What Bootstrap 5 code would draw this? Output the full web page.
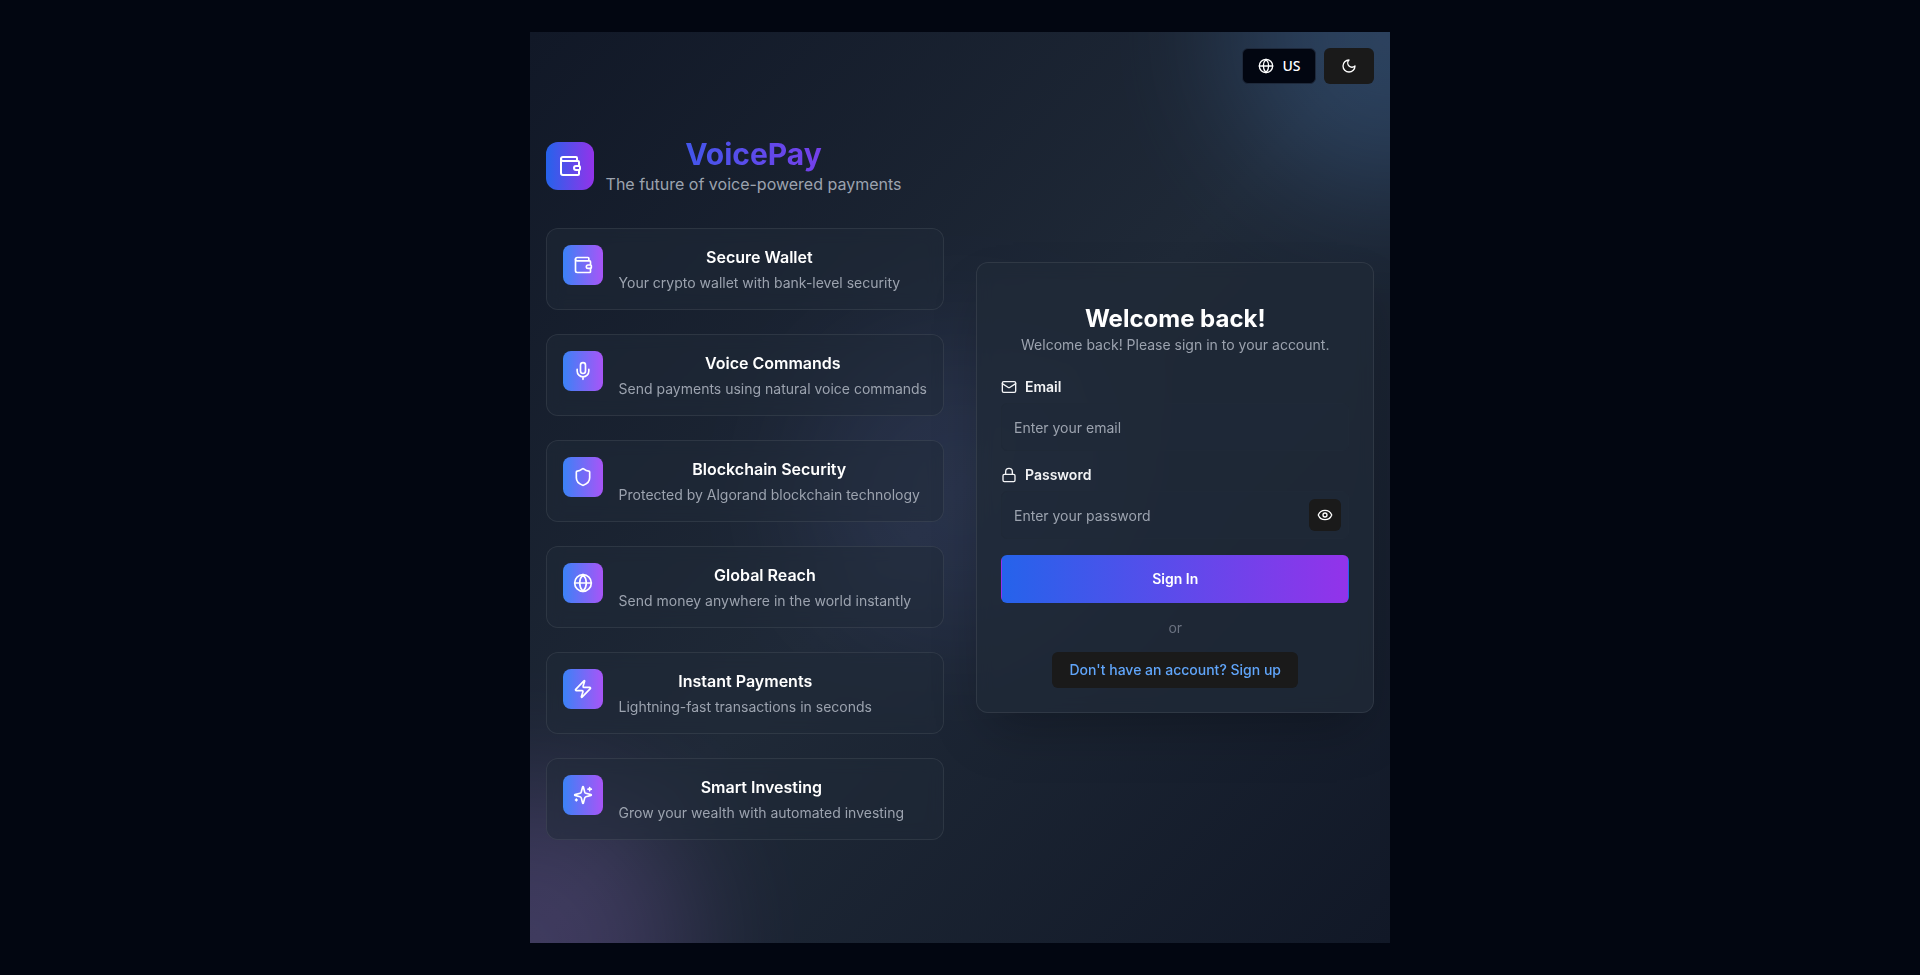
<!DOCTYPE html>
<html lang="en" data-bs-theme="dark">
<head>
<meta charset="utf-8">
<meta name="viewport" content="width=device-width, initial-scale=1">
<title>VoicePay</title>
<link href="https://cdn.jsdelivr.net/npm/bootstrap@5.3.0/dist/css/bootstrap.min.css" rel="stylesheet">
<style>
  :root {
    --page: #020611;
    --muted: #9ca3af;
    --line: rgba(255, 255, 255, .08);
  }
  body {
    background: var(--page);
    color: #fff;
    font-family: Inter, "Liberation Sans", sans-serif;
    font-size: 14px;
    line-height: 20px;
  }
  .icon {
    width: 16px;
    height: 16px;
    flex: none;
    fill: none;
    stroke: currentColor;
    stroke-width: 2;
    stroke-linecap: round;
    stroke-linejoin: round;
  }
  .icon-md { width: 20px; height: 20px; }
  .icon-lg { width: 24px; height: 24px; }

  .page-frame { min-height: 100vh; padding: 32px; }
  .stage {
    background: linear-gradient(to bottom right, #111827, #1f2937, #111827);
    isolation: isolate;
  }
  .glow {
    z-index: -1;
    width: 320px;
    height: 320px;
    border-radius: 50%;
    filter: blur(64px);
    opacity: .2;
  }
  .glow-blue { top: -160px; right: -160px; background: #60a5fa; }
  .glow-purple { bottom: -160px; left: -160px; background: #c084fc; }
  .glow-indigo { background: #818cf8; opacity: .1; }

  .columns { display: grid; gap: 32px; }
  @media (min-width: 992px) { .columns { grid-template-columns: 1fr 1fr; } }

  .dark-btn, .dark-btn:hover {
    background: #1a1a1a;
    color: #fff;
    border: 0;
    border-radius: 6px;
    font-size: 14px;
    font-weight: 500;
    line-height: 20px;
    padding: 8px 17px;
    min-height: 36px;
  }
  .locale-btn, .locale-btn:hover {
    background: var(--page);
    color: #fff;
    border: 1px solid #1e293b;
    border-radius: 6px;
    font: 500 14px/20px "Noto Sans", sans-serif;
    padding: 7px 15px;
  }
  .brand-tile {
    width: 48px;
    height: 48px;
    border-radius: 12px;
    background: linear-gradient(to right, #2563eb, #9333ea);
  }
  .brand-name {
    font-size: 30px;
    line-height: 36px;
    font-weight: 700;
    background: linear-gradient(to right, #2563eb, #9333ea);
    -webkit-background-clip: text;
    background-clip: text;
    color: transparent;
  }
  .tagline { font-size: 16px; line-height: 24px; color: var(--muted); }

  .feature, .panel {
    background: rgba(31, 41, 55, .5);
    border: 1px solid var(--line);
    border-radius: 12px;
    backdrop-filter: blur(8px);
  }
  .feature-tile {
    width: 40px;
    height: 40px;
    border-radius: 8px;
    background: linear-gradient(to right, #3b82f6, #a855f7);
  }
  .feature-title { font-size: 16px; line-height: 24px; font-weight: 600; }
  .soft { color: var(--muted); }

  .panel {
    background: rgba(31, 41, 55, .8);
    padding: 40px 24px 24px;
    box-shadow: 0 25px 50px -12px rgba(0, 0, 0, .25);
  }
  .panel-title { font-size: 24px; line-height: 32px; font-weight: 700; }
  .field-label { line-height: 16px; font-weight: 600; color: #f3f4f6; }
  .field, .field:focus {
    height: 48px;
    padding: 0 12px;
    font-size: 14px;
    color: #fff;
    background: rgba(31, 41, 55, .5);
    border: 1px solid #1f2937;
    border-radius: 6px;
  }
  .field::placeholder { color: var(--muted); }
  .eye-btn, .eye-btn:hover {
    right: 8px;
    width: 32px;
    height: 32px;
    background: #1a1a1a;
    color: #fff;
    border: 0;
    border-radius: 6px;
  }
  .submit-btn, .submit-btn:hover {
    height: 48px;
    font-size: 14px;
    font-weight: 600;
    line-height: 20px;
    color: #fff;
    border: 1px solid transparent;
    border-radius: 6px;
    background: linear-gradient(to right, #2563eb, #9333ea);
  }
  .or-text { color: #6b7280; line-height: 21px; padding: 14px 0; }
  .signup-btn, .signup-btn:hover { color: #60a5fa; }
</style>
</head>
<body>
<svg class="d-none" aria-hidden="true">
  <symbol id="wallet" viewBox="0 0 24 24"><path d="M19 7V4a1 1 0 0 0-1-1H5a2 2 0 0 0 0 4h15a1 1 0 0 1 1 1v4h-3a2 2 0 0 0 0 4h3a1 1 0 0 0 1-1v-2a1 1 0 0 0-1-1"/><path d="M3 5v14a2 2 0 0 0 2 2h15a1 1 0 0 0 1-1v-4"/></symbol>
  <symbol id="mic" viewBox="0 0 24 24"><path d="M12 2a3 3 0 0 0-3 3v7a3 3 0 0 0 6 0V5a3 3 0 0 0-3-3Z"/><path d="M19 10v2a7 7 0 0 1-14 0v-2M12 19v3"/></symbol>
  <symbol id="shield" viewBox="0 0 24 24"><path d="M20 13c0 5-3.5 7.500-7.660 8.950a1 1 0 0 1-.67-.01C7.500 20.500 4 18 4 13V6a1 1 0 0 1 1-1c2 0 4.500-1.200 6.240-2.720a1.170 1.170 0 0 1 1.520 0C14.510 3.810 17 5 19 5a1 1 0 0 1 1 1z"/></symbol>
  <symbol id="globe" viewBox="0 0 24 24"><circle cx="12" cy="12" r="10"/><path d="M12 2a14.500 14.500 0 0 0 0 20 14.500 14.500 0 0 0 0-20M2 12h20"/></symbol>
  <symbol id="zap" viewBox="0 0 24 24"><path d="M4 14a1 1 0 0 1-.78-1.630l9.900-10.200a.5.500 0 0 1 .86.460l-1.920 6.020A1 1 0 0 0 13 10h7a1 1 0 0 1 .78 1.630l-9.900 10.200a.5.500 0 0 1-.86-.46l1.920-6.020A1 1 0 0 0 11 14z"/></symbol>
  <symbol id="sparkles" viewBox="0 0 24 24"><path d="M9.937 15.500A2 2 0 0 0 8.500 14.063l-6.135-1.582a.5.500 0 0 1 0-.962L8.500 9.936A2 2 0 0 0 9.937 8.500l1.582-6.135a.5.500 0 0 1 .963 0L14.063 8.500A2 2 0 0 0 15.500 9.937l6.135 1.581a.5.500 0 0 1 0 .964L15.500 14.063a2 2 0 0 0-1.437 1.437l-1.582 6.135a.5.500 0 0 1-.963 0z"/><path d="M20 3v4M22 5h-4M4 17v2M5 18H3"/></symbol>
  <symbol id="moon" viewBox="0 0 24 24"><path d="M12 3a6 6 0 0 0 9 9 9 9 0 1 1-9-9Z"/></symbol>
  <symbol id="mail" viewBox="0 0 24 24"><rect width="20" height="16" x="2" y="4" rx="2"/><path d="m22 7-8.970 5.700a1.940 1.940 0 0 1-2.060 0L2 7"/></symbol>
  <symbol id="lock" viewBox="0 0 24 24"><rect width="18" height="11" x="3" y="11" rx="2"/><path d="M7 11V7a5 5 0 0 1 10 0v4"/></symbol>
  <symbol id="eye" viewBox="0 0 24 24"><path d="M2.062 12.348a1 1 0 0 1 0-.696 10.750 10.750 0 0 1 19.876 0 1 1 0 0 1 0 .696 10.750 10.750 0 0 1-19.876 0"/><circle cx="12" cy="12" r="3"/></symbol>
</svg>

<div class="page-frame d-flex justify-content-center">
  <div class="stage position-relative overflow-hidden d-flex align-items-center p-3">
    <div class="glow glow-blue position-absolute"></div>
    <div class="glow glow-purple position-absolute"></div>
    <div class="glow glow-indigo position-absolute top-50 start-50 translate-middle"></div>

    <div class="position-absolute top-0 end-0 m-3 d-flex align-items-center gap-2">
      <button type="button" class="btn locale-btn d-flex align-items-center gap-2"><svg class="icon" aria-hidden="true"><use href="#globe"/></svg>US</button>
      <button type="button" class="btn dark-btn d-flex align-items-center" aria-label="Toggle theme"><svg class="icon" aria-hidden="true"><use href="#moon"/></svg></button>
    </div>

    <main class="columns align-items-center">
      <section>
        <header class="d-flex align-items-center mb-4 pb-2">
          <div class="brand-tile d-flex align-items-center justify-content-center me-2"><svg class="icon icon-lg" aria-hidden="true"><use href="#wallet"/></svg></div>
          <div class="text-center ms-1">
            <h1 class="brand-name mb-0">VoicePay</h1>
            <p class="tagline mb-0">The future of voice-powered payments</p>
          </div>
        </header>
        <div class="d-flex flex-column gap-4">
          <article class="feature d-flex align-items-start gap-3 p-3">
            <div class="feature-tile d-flex align-items-center justify-content-center"><svg class="icon icon-md" aria-hidden="true"><use href="#wallet"/></svg></div>
            <div class="text-center"><h2 class="feature-title mb-1">Secure Wallet</h2><p class="soft mb-0">Your crypto wallet with bank-level security</p></div>
          </article>
          <article class="feature d-flex align-items-start gap-3 p-3">
            <div class="feature-tile d-flex align-items-center justify-content-center"><svg class="icon icon-md" aria-hidden="true"><use href="#mic"/></svg></div>
            <div class="text-center"><h2 class="feature-title mb-1">Voice Commands</h2><p class="soft mb-0">Send payments using natural voice commands</p></div>
          </article>
          <article class="feature d-flex align-items-start gap-3 p-3">
            <div class="feature-tile d-flex align-items-center justify-content-center"><svg class="icon icon-md" aria-hidden="true"><use href="#shield"/></svg></div>
            <div class="text-center"><h2 class="feature-title mb-1">Blockchain Security</h2><p class="soft mb-0">Protected by Algorand blockchain technology</p></div>
          </article>
          <article class="feature d-flex align-items-start gap-3 p-3">
            <div class="feature-tile d-flex align-items-center justify-content-center"><svg class="icon icon-md" aria-hidden="true"><use href="#globe"/></svg></div>
            <div class="text-center"><h2 class="feature-title mb-1">Global Reach</h2><p class="soft mb-0">Send money anywhere in the world instantly</p></div>
          </article>
          <article class="feature d-flex align-items-start gap-3 p-3">
            <div class="feature-tile d-flex align-items-center justify-content-center"><svg class="icon icon-md" aria-hidden="true"><use href="#zap"/></svg></div>
            <div class="text-center"><h2 class="feature-title mb-1">Instant Payments</h2><p class="soft mb-0">Lightning-fast transactions in seconds</p></div>
          </article>
          <article class="feature d-flex align-items-start gap-3 p-3">
            <div class="feature-tile d-flex align-items-center justify-content-center"><svg class="icon icon-md" aria-hidden="true"><use href="#sparkles"/></svg></div>
            <div class="text-center"><h2 class="feature-title mb-1">Smart Investing</h2><p class="soft mb-0">Grow your wealth with automated investing</p></div>
          </article>
        </div>
      </section>

      <section class="panel">
        <div class="text-center mb-4">
          <h2 class="panel-title mb-0">Welcome back!</h2>
          <p class="soft mb-0">Welcome back! Please sign in to your account.</p>
        </div>
        <form class="d-flex flex-column gap-3">
          <div>
            <label for="email" class="field-label d-flex align-items-center gap-2 mb-2"><svg class="icon" aria-hidden="true"><use href="#mail"/></svg>Email</label>
            <input id="email" type="email" class="form-control field" placeholder="Enter your email">
          </div>
          <div>
            <label for="password" class="field-label d-flex align-items-center gap-2 mb-2"><svg class="icon" aria-hidden="true"><use href="#lock"/></svg>Password</label>
            <div class="position-relative">
              <input id="password" type="password" class="form-control field" placeholder="Enter your password">
              <button type="button" class="btn eye-btn position-absolute top-50 translate-middle-y p-0 d-flex align-items-center justify-content-center" aria-label="Show password"><svg class="icon" aria-hidden="true"><use href="#eye"/></svg></button>
            </div>
          </div>
          <button type="submit" class="btn submit-btn w-100">Sign In</button>
        </form>
        <div class="or-text text-center">or</div>
        <div class="text-center d-flex justify-content-center">
          <button type="button" class="btn dark-btn signup-btn">Don't have an account? Sign up</button>
        </div>
      </section>
    </main>
  </div>
</div>
<script src="https://cdn.jsdelivr.net/npm/bootstrap@5.3.0/dist/js/bootstrap.bundle.min.js"></script>
</body>
</html>
